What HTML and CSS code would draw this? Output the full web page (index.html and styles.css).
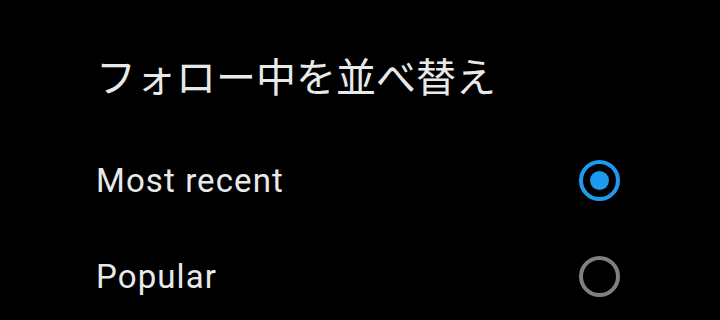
FILE: index.html
```html
<!DOCTYPE html>
<html lang="ja">
<head>
<meta charset="utf-8">
<link rel="stylesheet" href="styles.css">
</head>
<body>
<div class="sheet">
  <h1 class="title">フォロー中を並べ替え</h1>
  <div class="options">
    <div class="option">
      <span class="label">Most recent</span>
      <span class="radio radio-on"><span class="dot"></span></span>
    </div>
    <div class="option">
      <span class="label">Popular</span>
      <span class="radio"></span>
    </div>
  </div>
</div>
</body>
</html>
```
FILE: styles.css
```css
html, body {
  margin: 0;
  padding: 0;
  background: #000;
}
.sheet {
  width: 720px;
  height: 320px;
  box-sizing: border-box;
  padding: 47px 100px 0 96px;
  overflow: hidden;
}
.title {
  margin: 0;
  height: 85px;
  font-family: "Noto Sans CJK JP", "Noto Sans", sans-serif;
  font-weight: 400;
  font-size: 40px;
  line-height: 56px;
  color: #e7e9ea;
}
.options {
  display: flex;
  flex-direction: column;
}
.option {
  height: 96px;
  display: flex;
  align-items: center;
  justify-content: space-between;
}
.label {
  font-family: Roboto, "Liberation Sans", sans-serif;
  font-size: 33px;
  letter-spacing: 1.1px;
  color: #e7e9ea;
}
.radio {
  width: 41px;
  height: 41px;
  box-sizing: border-box;
  border: 4px solid #808080;
  border-radius: 50%;
  display: flex;
  align-items: center;
  justify-content: center;
}
.radio-on {
  border-color: #1d9bf0;
}
.dot {
  width: 19px;
  height: 19px;
  border-radius: 50%;
  background: #1d9bf0;
}
```
